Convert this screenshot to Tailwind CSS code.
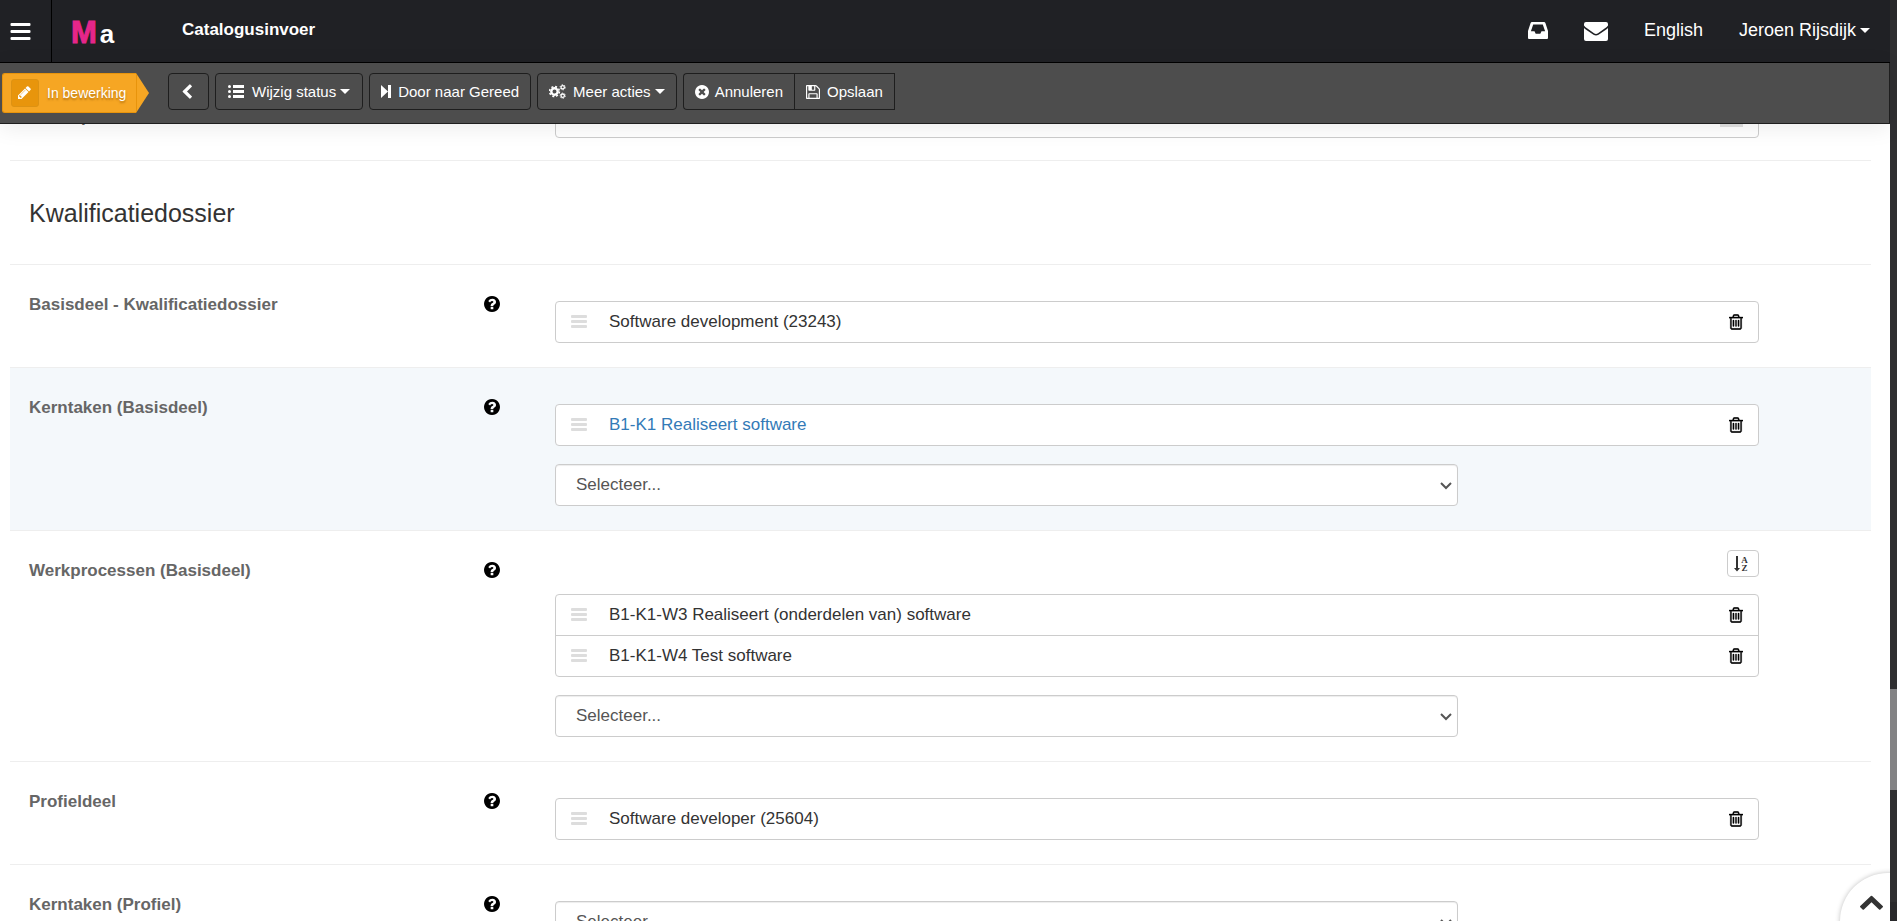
<!DOCTYPE html>
<html lang="nl">
<head>
<meta charset="utf-8">
<meta name="viewport" content="width=device-width, initial-scale=1">
<title>Catalogusinvoer</title>
<script src="https://cdn.jsdelivr.net/npm/@tailwindcss/browser@4"></script>
</head>
<body class="flex h-screen overflow-hidden bg-white font-['Liberation_Sans',Arial,sans-serif] text-[17px] leading-6 text-[#333]">

<svg class="hidden" aria-hidden="true">
  <symbol id="bars" viewBox="0 0 20 17"><rect width="20" height="3" rx="1"/><rect y="7" width="20" height="3" rx="1"/><rect y="14" width="20" height="3" rx="1"/></symbol>
  <symbol id="grip" viewBox="0 0 16 14"><rect width="16" height="3" rx="1"/><rect y="5" width="16" height="3" rx="1"/><rect y="10" width="16" height="3" rx="1"/></symbol>
  <symbol id="caret" viewBox="0 0 10 5"><path d="M0 0h10L5 5z"/></symbol>
  <symbol id="help" viewBox="128 128 1536 1536"><path d="M1024 1376v-192q0-14-9-23t-23-9h-192q-14 0-23 9t-9 23v192q0 14 9 23t23 9h192q14 0 23-9t9-23zm256-672q0-88-55.5-163t-138.5-116-170-41q-243 0-371 213-15 24 8 42l132 100q7 6 19 6 16 0 25-12 53-68 86-92 34-24 86-24 48 0 85.5 26t37.5 59q0 38-20 61t-68 45q-63 28-115.5 86.5t-52.5 125.5v36q0 14 9 23t23 9h192q14 0 23-9t9-23q0-19 21.5-49.5t54.5-49.5q32-18 49-28.5t46-35 44.5-48 28-60.5 12.5-81zm384 192q0 209-103 385.5t-279.5 279.5-385.5 103-385.5-103-279.5-279.5-103-385.5 103-385.5 279.5-279.5 385.5-103 385.5 103 279.5 279.5 103 385.5z"/></symbol>
  <symbol id="trash" viewBox="192 128 1408 1536"><path stroke="#000" stroke-width="30" d="M704 736v576q0 14-9 23t-23 9h-64q-14 0-23-9t-9-23v-576q0-14 9-23t23-9h64q14 0 23 9t9 23zm256 0v576q0 14-9 23t-23 9h-64q-14 0-23-9t-9-23v-576q0-14 9-23t23-9h64q14 0 23 9t9 23zm256 0v576q0 14-9 23t-23 9h-64q-14 0-23-9t-9-23v-576q0-14 9-23t23-9h64q14 0 23 9t9 23zm128 724v-948h-896v948q0 22 7 40.5t14.5 27 10.5 8.5h832q3 0 10.5-8.5t14.5-27 7-40.5zm-672-1076h448l-48-117q-7-9-17-11h-317q-10 2-17 11zm928 32v64q0 14-9 23t-23 9h-96v948q0 83-47 143.5t-113 60.5h-832q-66 0-113-58.5t-47-141.5v-952h-96q-14 0-23-9t-9-23v-64q0-14 9-23t23-9h309l70-167q15-37 54-63t79-26h320q40 0 79 26t54 63l70 167h309q14 0 23 9t9 23z"/></symbol>
  <symbol id="down" viewBox="0 0 12 8"><path d="M1 1l5 5 5-5" fill="none" stroke="currentColor" stroke-width="2"/></symbol>
</svg>

<div class="relative flex min-w-0 flex-1 flex-col">
  <header class="flex h-[63px] shrink-0 items-stretch border-b border-black bg-[#202125] text-white">
    <button class="flex w-[52px] items-center border-r border-black pl-[10px]" aria-label="Menu"><svg class="h-[17px] w-[21px] fill-white"><use href="#bars"/></svg></button>
    <a href="#" class="flex w-[110px] items-baseline gap-[3px] pt-[12px] pl-[19px] leading-[42px] font-bold"><span class="text-[31px] text-[#e5268a] [-webkit-text-stroke:1px_#e5268a]">M</span><span class="text-[26px]">a</span></a>
    <h1 class="pt-[18px] pl-[20px] font-bold">Catalogusinvoer</h1>
    <nav class="ml-auto flex items-start pt-[18px] pr-[20px] text-[18px]">
      <a href="#" aria-label="Inbox" class="pt-[4px]"><svg class="h-[17px] w-[20px] fill-white" viewBox="0 0 20 17"><path fill-rule="evenodd" d="M4 0h12q1 0 1.400 1L20 9v7q0 1-1 1H1q-1 0-1-1V9L2.600 1Q3 0 4 0zM5.200 2.600 2.900 9.200H6.500L7.700 11.700h4.600L13.500 9.200h3.600L14.800 2.600z"/></svg></a>
      <a href="#" aria-label="Berichten" class="ml-[36px] pt-[4px]"><svg class="h-[19px] w-[24px] fill-white" viewBox="0 0 24 19"><path d="M2 0h20q2 0 2 2v1.500q-1 1.500-3 2.800L14 11.200q-2 1.400-4 0L3 6.300Q1 5 0 3.500V2q0-2 2-2z"/><path d="M0 6q1 1 2.500 2L9.500 12.700q2.500 1.600 5 0L21.500 8Q23 7 24 6v11q0 2-2 2H2q-2 0-2-2z"/></svg></a>
      <a href="#" class="ml-[36px]">English</a>
      <button class="ml-[36px] flex items-center gap-1">Jeroen Rijsdijk<svg class="h-[5px] w-[10px] fill-white"><use href="#caret"/></svg></button>
    </nav>
  </header>

  <div class="z-10 flex h-[61px] shrink-0 items-start border-r border-b border-[#1e1e1e] bg-[#4d4d4d] pt-[10px] text-[15px] text-white shadow-[0_4px_22px_rgba(0,0,0,0.08)]">
    <div class="ml-[2px] flex">
      <span class="flex h-10 w-[134px] items-center rounded-l-[3px] border border-r-0 border-[#e8940c] bg-[#f6a623] pl-2 text-[14px] [text-shadow:0_2px_2px_rgba(120,70,0,0.5)]">
        <span class="mr-2 flex h-7 w-7 items-center justify-center rounded-[3px] border border-[#dd9213] bg-[#e8950c]"><svg class="h-[14px] w-[14px] fill-white" viewBox="128 128 1664 1664"><path d="M491 1536l91-91-235-235-91 91v107h128v128h107zm523-928q0-22-22-22-10 0-17 7l-542 542q-7 7-7 17 0 22 22 22 10 0 17-7l542-542q7-7 7-17zm-54-192l416 416-832 832h-416v-416zm683 96q0 53-37 90l-166 166-416-416 166-165q36-38 90-38 53 0 91 38l235 234q37 39 37 91z"/></svg></span>
        In bewerking
      </span>
      <svg class="h-10 w-[13px]" viewBox="0 0 13 40"><path d="M0 0l13 20L0 40z" fill="#f6a623"/><path d="M.5 1v38" stroke="#e8940c"/></svg>
    </div>
    <div class="ml-[19px] flex gap-[6px]">
      <button aria-label="Terug" class="flex h-[37px] w-[41px] items-center rounded border border-[#1e1e1e] pl-[11px]"><svg class="h-[15px] w-[14px] fill-white" viewBox="128 0 1536 1664"><path d="M1427 301l-531 531 531 531q19 19 19 45t-19 45l-166 166q-19 19-45 19t-45-19l-742-742q-19-19-19-45t19-45l742-742q19-19 45-19t45 19l166 166q19 19 19 45t-19 45z"/></svg></button>
      <button class="flex h-[37px] items-center rounded border border-[#1e1e1e] px-3"><svg class="mr-2 h-[13px] w-4 fill-white" viewBox="0 0 16 13"><circle cx="1.500" cy="1.500" r="1.500"/><circle cx="1.500" cy="6.500" r="1.500"/><circle cx="1.500" cy="11.500" r="1.500"/><path d="M5 0h11v3H5zM5 5h11v3H5zM5 10h11v3H5z"/></svg>Wijzig status<svg class="ml-1 h-[5px] w-[10px] fill-white"><use href="#caret"/></svg></button>
      <button class="flex h-[37px] items-center rounded border border-[#1e1e1e] px-[11px]"><svg class="mr-[7px] h-[13px] w-[10px] fill-white" viewBox="0 0 10 13"><path d="M0 0l7 6.500L0 13zM7 0h3v13H7z"/></svg>Door naar Gereed</button>
      <button class="flex h-[37px] items-center rounded border border-[#1e1e1e] px-[11px]"><svg class="mr-[7px] h-[15px] w-[17px]" viewBox="0 0 17 15" fill="none" stroke="#fff"><circle cx="5.500" cy="7.500" r="3.200" stroke-width="2.400"/><circle cx="5.500" cy="7.500" r="4.900" stroke-width="1.600" stroke-dasharray="2 1.850"/><circle cx="13.700" cy="3.300" r="1.700" stroke-width="1.300"/><circle cx="13.700" cy="3.300" r="2.600" stroke-width="1" stroke-dasharray="1.300 1.420"/><circle cx="13.700" cy="11.700" r="1.700" stroke-width="1.300"/><circle cx="13.700" cy="11.700" r="2.600" stroke-width="1" stroke-dasharray="1.300 1.420"/></svg>Meer acties<svg class="ml-1 h-[5px] w-[10px] fill-white"><use href="#caret"/></svg></button>
      <div class="flex">
        <button class="flex h-[37px] items-center rounded-l border border-r-0 border-[#1e1e1e] px-[11px]"><svg class="mr-[6px] h-[14px] w-[14px] fill-white" viewBox="128 128 1536 1536"><path d="M1277 1122q0-26-19-45l-181-181 181-181q19-19 19-45 0-27-19-46l-90-90q-19-19-46-19-26 0-45 19l-181 181-181-181q-19-19-45-19-27 0-46 19l-90 90q-19 19-19 46 0 26 19 45l181 181-181 181q-19 19-19 45 0 27 19 46l90 90q19 19 46 19 26 0 45-19l181-181 181 181q19 19 45 19 27 0 46-19l90-90q19-19 19-46zm387-226q0 209-103 385.500t-279.500 279.500-385.500 103-385.500-103-279.500-279.500-103-385.500 103-385.500 279.500-279.500 385.500-103 385.500 103 279.500 279.500 103 385.500z"/></svg>Annuleren</button>
        <button class="flex h-[37px] items-center border border-[#1e1e1e] px-[11px]"><svg class="mr-[7px] h-[14px] w-[14px] fill-white" viewBox="128 128 1536 1536"><path d="M512 1536h768v-384h-768v384zm896 0h128v-896q0-14-10-38.500t-20-34.500l-281-281q-10-10-34-20t-39-10v416q0 40-28 68t-68 28h-576q-40 0-68-28t-28-68v-416h-128v1280h128v-416q0-40 28-68t68-28h832q40 0 68 28t28 68v416zm-384-928v-320q0-13-9.500-22.500t-22.500-9.500h-192q-13 0-22.500 9.500t-9.500 22.500v320q0 13 9.500 22.500t22.500 9.500h192q13 0 22.500-9.500t9.500-22.500zm640 32v928q0 40-28 68t-68 28h-1344q-40 0-68-28t-28-68v-1344q0-40 28-68t68-28h928q40 0 88 20t76 48l280 280q28 28 48 76t20 88z"/></svg>Opslaan</button>
      </div>
    </div>
  </div>

  <main class="min-h-0 flex-1 overflow-hidden pr-[19px] pl-[10px]">
    <section class="-mt-12 grid grid-cols-[490fr_1259fr_112fr] pb-[22px]">
      <div class="flex justify-between pt-[29px] pl-[19px]"><label for="concept" class="font-bold text-[#666]">Concept</label></div>
      <div class="pt-5 pl-[55px]"><div class="flex items-center rounded border border-[#ccc] bg-white pr-[15px]"><input id="concept" class="h-10 min-w-0 flex-1 px-5 outline-none"><span class="h-5 w-[23px] bg-[#e0e0e0]"></span></div></div>
    </section>

    <h2 class="border-t border-[#eee] pt-[37px] pb-[36px] pl-[19px] text-[25px] leading-[30px]">Kwalificatiedossier</h2>

    <section class="grid grid-cols-[490fr_1259fr_112fr] border-t border-[#eee] pb-6">
      <div class="flex items-start justify-between pt-[28px] pl-[19px]"><h3 class="font-bold text-[#666]">Basisdeel - Kwalificatiedossier</h3><button aria-label="Help" class="pt-[3px]"><svg class="h-4 w-4"><use href="#help"/></svg></button></div>
      <div class="pt-9 pl-[55px]">
        <ul class="rounded border border-[#ccc] bg-white">
          <li class="flex h-10 items-center pr-[15px] pl-[15px]"><svg class="mr-[22px] h-[14px] w-4 fill-[#ddd]"><use href="#grip"/></svg><span class="flex-1">Software development (23243)</span><button aria-label="Verwijderen"><svg class="h-4 w-[14px]"><use href="#trash"/></svg></button></li>
        </ul>
      </div>
    </section>

    <section class="grid grid-cols-[490fr_1259fr_112fr] border-t border-[#eee] bg-[#f4f8fb] pb-6">
      <div class="flex items-start justify-between pt-[28px] pl-[19px]"><label for="kt" class="font-bold text-[#666]">Kerntaken (Basisdeel)</label><button aria-label="Help" class="pt-[3px]"><svg class="h-4 w-4"><use href="#help"/></svg></button></div>
      <div class="pt-9 pl-[55px]">
        <ul class="rounded border border-[#ccc] bg-white">
          <li class="flex h-10 items-center pr-[15px] pl-[15px]"><svg class="mr-[22px] h-[14px] w-4 fill-[#ddd]"><use href="#grip"/></svg><a href="#" class="text-[#337ab7]">B1-K1 Realiseert software</a><button aria-label="Verwijderen" class="ml-auto"><svg class="h-4 w-[14px]"><use href="#trash"/></svg></button></li>
        </ul>
        <div class="relative mt-[18px] w-3/4"><select id="kt" class="block h-[42px] w-full appearance-none rounded border border-[#ccc] bg-white px-5 text-[#555] shadow-[inset_0_1px_1px_rgba(0,0,0,0.075)]"><option>Selecteer...</option></select><svg class="pointer-events-none absolute top-[18px] right-[6px] h-2 w-3 text-[#555]"><use href="#down"/></svg></div>
      </div>
    </section>

    <section class="grid grid-cols-[490fr_1259fr_112fr] border-t border-[#eee] pb-6">
      <div class="flex items-start justify-between pt-[28px] pl-[19px]"><label for="wp" class="font-bold text-[#666]">Werkprocessen (Basisdeel)</label><button aria-label="Help" class="pt-[3px]"><svg class="h-4 w-4"><use href="#help"/></svg></button></div>
      <div class="pt-[19px] pl-[55px]">
        <div class="flex justify-end"><button aria-label="Sorteren van A tot Z" class="flex h-[27px] w-8 items-center justify-start rounded border border-[#ccc] pl-[6px]"><svg class="h-[16px] w-[15px] overflow-visible fill-[#333]" viewBox="0 0 15 16"><path d="M2 0h2v12h2l-3 3.500L0 12h2z"/><text x="10.500" y="7" text-anchor="middle" font-family="Liberation Serif,serif" font-weight="700" font-size="9">A</text><text x="10.500" y="15" text-anchor="middle" font-family="Liberation Serif,serif" font-weight="700" font-size="9">Z</text></svg></button></div>
        <ul class="mt-[17px] divide-y divide-[#ccc] rounded border border-[#ccc] bg-white">
          <li class="flex h-[41px] items-center pr-[15px] pl-[15px]"><svg class="mr-[22px] h-[14px] w-4 fill-[#ddd]"><use href="#grip"/></svg><span class="flex-1">B1-K1-W3 Realiseert (onderdelen van) software</span><button aria-label="Verwijderen"><svg class="h-4 w-[14px]"><use href="#trash"/></svg></button></li>
          <li class="flex h-10 items-center pr-[15px] pl-[15px]"><svg class="mr-[22px] h-[14px] w-4 fill-[#ddd]"><use href="#grip"/></svg><span class="flex-1">B1-K1-W4 Test software</span><button aria-label="Verwijderen"><svg class="h-4 w-[14px]"><use href="#trash"/></svg></button></li>
        </ul>
        <div class="relative mt-[18px] w-3/4"><select id="wp" class="block h-[42px] w-full appearance-none rounded border border-[#ccc] bg-white px-5 text-[#555] shadow-[inset_0_1px_1px_rgba(0,0,0,0.075)]"><option>Selecteer...</option></select><svg class="pointer-events-none absolute top-[18px] right-[6px] h-2 w-3 text-[#555]"><use href="#down"/></svg></div>
      </div>
    </section>

    <section class="grid grid-cols-[490fr_1259fr_112fr] border-t border-[#eee] pb-6">
      <div class="flex items-start justify-between pt-[28px] pl-[19px]"><h3 class="font-bold text-[#666]">Profieldeel</h3><button aria-label="Help" class="pt-[3px]"><svg class="h-4 w-4"><use href="#help"/></svg></button></div>
      <div class="pt-9 pl-[55px]">
        <ul class="rounded border border-[#ccc] bg-white">
          <li class="flex h-10 items-center pr-[15px] pl-[15px]"><svg class="mr-[22px] h-[14px] w-4 fill-[#ddd]"><use href="#grip"/></svg><span class="flex-1">Software developer (25604)</span><button aria-label="Verwijderen"><svg class="h-4 w-[14px]"><use href="#trash"/></svg></button></li>
        </ul>
      </div>
    </section>

    <section class="grid grid-cols-[490fr_1259fr_112fr] border-t border-[#eee] pb-6">
      <div class="flex items-start justify-between pt-[28px] pl-[19px]"><label for="kp" class="font-bold text-[#666]">Kerntaken (Profiel)</label><button aria-label="Help" class="pt-[3px]"><svg class="h-4 w-4"><use href="#help"/></svg></button></div>
      <div class="pt-9 pl-[55px]">
        <div class="relative w-3/4"><select id="kp" class="block h-[42px] w-full appearance-none rounded border border-[#ccc] bg-white px-5 text-[#555] shadow-[inset_0_1px_1px_rgba(0,0,0,0.075)]"><option>Selecteer...</option></select><svg class="pointer-events-none absolute top-[18px] right-[6px] h-2 w-3 text-[#555]"><use href="#down"/></svg></div>
      </div>
    </section>
  </main>

  <div class="pointer-events-none absolute right-0 bottom-0 h-14 w-14 overflow-hidden">
    <button aria-label="Naar boven" class="pointer-events-auto absolute top-[8px] left-[6px] h-24 w-24 rounded-full bg-white shadow-[0_0_5px_rgba(0,0,0,0.25)]"><svg class="absolute top-[22px] left-5 h-[15px] w-[23px] fill-[#333]" viewBox="90 420 1612 1110" preserveAspectRatio="none"><path d="M1683 1331l-166 165q-19 19-45 19t-45-19l-531-531-531 531q-19 19-45 19t-45-19l-166-165q-19-19-19-45.500t19-45.500l742-741q19-19 45-19t45 19l742 741q19 19 19 45.500t-19 45.500z"/></svg></button>
  </div>
</div>

<!-- page scrollbar -->
<div class="flex w-[7px] shrink-0 flex-col overflow-hidden bg-[#2f2f31]" aria-hidden="true">
  <div class="h-5 bg-[#29292b]"></div>
  <div class="grow-669"></div>
  <div class="grow-101 bg-[#828284]"></div>
  <div class="grow-112"></div>
  <div class="h-[19px] bg-[#29292b]"></div>
</div>
</body>
</html>
